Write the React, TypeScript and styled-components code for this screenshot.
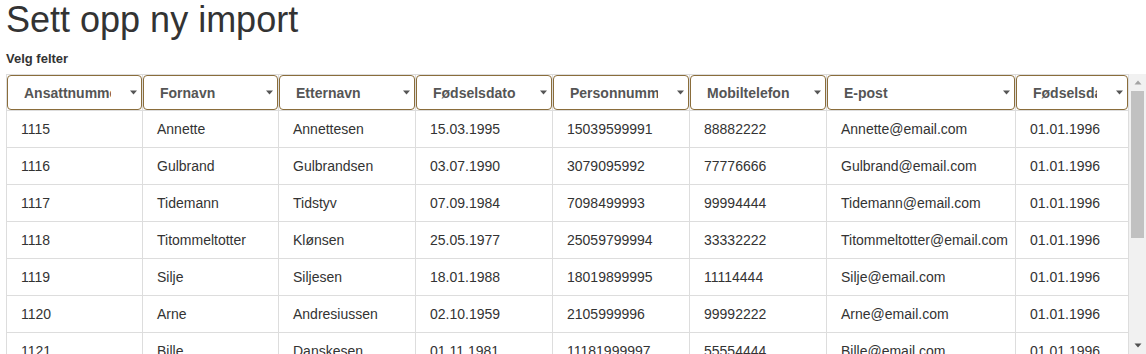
import React from 'react';
import styled, { createGlobalStyle } from 'styled-components';

interface Employee {
  id: string;
  firstName: string;
  lastName: string;
  birthDate: string;
  personNumber: string;
  mobile: string;
  email: string;
  startDate: string;
}

const fields = [
  { key: 'id', label: 'Ansattnummer', width: 136 },
  { key: 'firstName', label: 'Fornavn', width: 136 },
  { key: 'lastName', label: 'Etternavn', width: 137 },
  { key: 'birthDate', label: 'Fødselsdato', width: 137 },
  { key: 'personNumber', label: 'Personnummer', width: 137 },
  { key: 'mobile', label: 'Mobiltelefon', width: 137 },
  { key: 'email', label: 'E-post', width: 189 },
  { key: 'startDate', label: 'Fødselsdato', width: undefined },
];

const rows: Employee[] = [
  { id: '1115', firstName: 'Annette', lastName: 'Annettesen', birthDate: '15.03.1995', personNumber: '15039599991', mobile: '88882222', email: 'Annette@email.com', startDate: '01.01.1996' },
  { id: '1116', firstName: 'Gulbrand', lastName: 'Gulbrandsen', birthDate: '03.07.1990', personNumber: '3079095992', mobile: '77776666', email: 'Gulbrand@email.com', startDate: '01.01.1996' },
  { id: '1117', firstName: 'Tidemann', lastName: 'Tidstyv', birthDate: '07.09.1984', personNumber: '7098499993', mobile: '99994444', email: 'Tidemann@email.com', startDate: '01.01.1996' },
  { id: '1118', firstName: 'Titommeltotter', lastName: 'Klønsen', birthDate: '25.05.1977', personNumber: '25059799994', mobile: '33332222', email: 'Titommeltotter@email.com', startDate: '01.01.1996' },
  { id: '1119', firstName: 'Silje', lastName: 'Siljesen', birthDate: '18.01.1988', personNumber: '18019899995', mobile: '11114444', email: 'Silje@email.com', startDate: '01.01.1996' },
  { id: '1120', firstName: 'Arne', lastName: 'Andresiussen', birthDate: '02.10.1959', personNumber: '2105999996', mobile: '99992222', email: 'Arne@email.com', startDate: '01.01.1996' },
  { id: '1121', firstName: 'Bille', lastName: 'Danskesen', birthDate: '01.11.1981', personNumber: '11181999997', mobile: '55554444', email: 'Bille@email.com', startDate: '01.01.1996' },
];

const GlobalStyle = createGlobalStyle`
  html, body {
    margin: 0;
    overflow: hidden;
    background: #fff;
  }
  body {
    font-family: "Liberation Sans", Arial, sans-serif;
    font-size: 14px;
    color: #333;
  }
`;

const Arrow: React.FC<{ color: string; up?: boolean; width?: number }> = ({ color, up, width = 7 }) => (
  <svg width={width} height="5" viewBox="0 0 7 5">
    <path d={up ? 'M0 4.5 L7 4.5 L3.5 0.5 Z' : 'M0 0.5 L7 0.5 L3.5 4.5 Z'} fill={color} />
  </svg>
);

const App: React.FC = () => {
  return (
    <>
      <GlobalStyle />
      <Page>
        <Title>Sett opp ny import</Title>
        <Label>Velg felter</Label>
        <ScrollFrame>
          <Viewport>
            <Table>
              <colgroup>
                {fields.map((f, i) => (
                  <col key={i} style={f.width ? { width: f.width } : undefined} />
                ))}
              </colgroup>
              <thead>
                <tr>
                  {fields.map((f, i) => (
                    <HeadCell key={i}>
                      <SelectWrap>
                        <FieldSelect defaultValue={f.key}>
                          <option value={f.key}>{f.label}</option>
                        </FieldSelect>
                        <Caret>
                          <Arrow color="#555" />
                        </Caret>
                      </SelectWrap>
                    </HeadCell>
                  ))}
                </tr>
              </thead>
              <tbody>
                {rows.map((r) => (
                  <tr key={r.id}>
                    {fields.map((f, i) => (
                      <Cell key={i}>{r[f.key as keyof Employee]}</Cell>
                    ))}
                  </tr>
                ))}
              </tbody>
            </Table>
          </Viewport>
          <Scrollbar>
            <ScrollButton>
              <Arrow color="#a3a3a3" up width={8} />
            </ScrollButton>
            <Track>
              <Thumb />
            </Track>
            <ScrollButton>
              <Arrow color="#505050" width={8} />
            </ScrollButton>
          </Scrollbar>
        </ScrollFrame>
      </Page>
    </>
  );
};

const Page = styled.div`
  padding-left: 6px;
`;

const Title = styled.h1`
  margin: 0;
  font-size: 36px;
  line-height: 40px;
  font-weight: normal;
  color: #333;
`;

const Label = styled.div`
  margin: 10px 0 6px;
  font-size: 13px;
  line-height: 18px;
  font-weight: bold;
  color: #333;
`;

const ScrollFrame = styled.div`
  display: flex;
  height: 280px;
`;

const Viewport = styled.div`
  flex: 1;
  min-width: 0;
  overflow: hidden;
`;

const Scrollbar = styled.div`
  width: 17px;
  flex-shrink: 0;
  display: flex;
  flex-direction: column;
  background: #f1f1f1;
`;

const ScrollButton = styled.div`
  height: 17px;
  display: flex;
  align-items: center;
  justify-content: center;
`;

const Track = styled.div`
  flex: 1;
  padding: 0 2px;
`;

const Thumb = styled.div`
  height: 147px;
  background: #c1c1c1;
`;

const Table = styled.table`
  width: 100%;
  table-layout: fixed;
  border-collapse: collapse;
  border: 1px solid #ddd;
`;

const HeadCell = styled.th`
  padding: 0;
  border: 1px solid #ddd;
  vertical-align: top;
`;

const SelectWrap = styled.div`
  position: relative;
  height: 35px;
`;

const FieldSelect = styled.select`
  appearance: none;
  -webkit-appearance: none;
  display: block;
  width: 100%;
  height: 35px;
  margin: 0;
  padding: 0 30px 0 16px;
  box-sizing: border-box;
  border: 1px solid #8a6d3b;
  border-radius: 4px;
  background: #fff;
  font-family: "Liberation Sans", Arial, sans-serif;
  font-size: 14px;
  font-weight: bold;
  color: #555;
  outline: none;
`;

const Caret = styled.span`
  position: absolute;
  right: 5px;
  top: 15px;
  display: flex;
  pointer-events: none;
`;

const Cell = styled.td`
  padding: 8px 13px 8px 14px;
  line-height: 20px;
  border: 1px solid #ddd;
  white-space: nowrap;
  overflow: hidden;
  color: #333;
`;

export default App;
